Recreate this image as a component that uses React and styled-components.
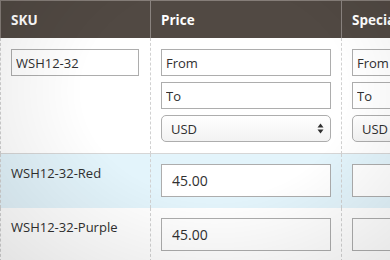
import React from "react";
import styled, { createGlobalStyle } from "styled-components";

const GlobalStyle = createGlobalStyle`
  body {
    margin: 0;
    font-family: "Open Sans", "Noto Sans", sans-serif;
    color: #303030;
    background: #fff;
    overflow: hidden;
  }
  body::after {
    content: "";
    position: fixed;
    inset: 0;
    pointer-events: none;
    background: radial-gradient(ellipse 75% 90% at 55% 35%, rgba(0, 0, 0, 0) 45%, rgba(0, 0, 0, 0.1) 100%);
  }
`;

const Grid = styled.div`
  display: grid;
  grid-template-columns: 150px 191px 191px;
  width: 532px;
`;

const HeadCell = styled.div`
  height: 38px;
  box-sizing: border-box;
  background: #514943;
  border-top: 1px solid #857d78;
  border-left: 1px solid ${(p) => (p.$first ? "#857d78" : "#8a837f")};
  color: #fff;
  font-weight: 700;
  font-size: 13.5px;
  padding: 0 10px;
  display: flex;
  align-items: center;
`;

const Cell = styled.div`
  box-sizing: border-box;
  border-left: 1px dashed #d1d1d1;
  padding: ${(p) => (p.$filter ? "11px 10px" : "10px 10px 11px")};
  padding-right: ${(p) => (p.$first ? "11px" : "10px")};
  background: ${(p) => (p.$active ? "#e3f4fb" : "transparent")};
  border-bottom: ${(p) => (p.$filter ? "1px solid #d6d6d6" : "none")};
  display: flex;
  flex-direction: column;
  gap: 6px;
  font-size: 13px;
  line-height: 18px;
`;

const FilterInput = styled.input`
  box-sizing: border-box;
  width: 100%;
  height: 27px;
  margin: 0;
  border: 1px solid #adadad;
  border-radius: 0;
  padding: 0 4px;
  font-family: inherit;
  font-size: 13px;
  color: #303030;
  background: #fff;
  &::placeholder {
    color: #303030;
    opacity: 1;
  }
`;

const PriceInput = styled(FilterInput)`
  height: 33px;
  padding: 0 10px;
  font-size: 14px;
`;

const SelectBox = styled.div`
  box-sizing: border-box;
  height: 27px;
  border: 1px solid #adadad;
  border-radius: 5px;
  background: linear-gradient(#fff, #f2f2f2);
  display: flex;
  align-items: center;
  justify-content: space-between;
  padding: 0 6px 0 9px;
  font-size: 13px;
`;

const Arrows = () => (
  <svg width="7" height="11" viewBox="0 0 7 11">
    <path d="M3.5 0.5 L6.5 4.5 H0.5 Z" fill="#303030" />
    <path d="M3.5 10.5 L6.5 6.5 H0.5 Z" fill="#303030" />
  </svg>
);

const rows = [
  { sku: "WSH12-32-Red", price: "45.00", active: true },
  { sku: "WSH12-32-Purple", price: "45.00" },
];

const App = () => {
  return (
    <>
      <GlobalStyle />
      <Grid>
        <HeadCell $first>SKU</HeadCell>
        <HeadCell>Price</HeadCell>
        <HeadCell>Special Price</HeadCell>

        <Cell $filter $first>
          <FilterInput defaultValue="WSH12-32" />
        </Cell>
        <Cell $filter>
          <FilterInput placeholder="From" />
          <FilterInput placeholder="To" />
          <SelectBox>
            USD <Arrows />
          </SelectBox>
        </Cell>
        <Cell $filter>
          <FilterInput placeholder="From" />
          <FilterInput placeholder="To" />
          <SelectBox>
            USD <Arrows />
          </SelectBox>
        </Cell>

        {rows.map((r) => (
          <React.Fragment key={r.sku}>
            <Cell $first $active={r.active}>{r.sku}</Cell>
            <Cell $active={r.active}>
              <PriceInput defaultValue={r.price} />
            </Cell>
            <Cell $active={r.active}>
              <PriceInput defaultValue="" />
            </Cell>
          </React.Fragment>
        ))}
      </Grid>
    </>
  );
};

export default App;
